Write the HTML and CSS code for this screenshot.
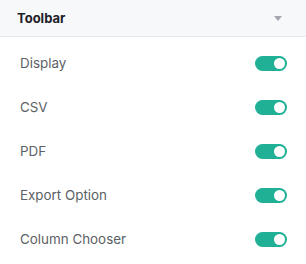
FILE: index.html
```html
<!DOCTYPE html>
<html lang="en">
<head>
<meta charset="UTF-8" />
<meta name="viewport" content="width=device-width, initial-scale=1" />
<title>Toolbar</title>
<link rel="stylesheet" href="styles.css">
</head>
<body>
  <div class="panel">
    <div class="panel-head">
      <span class="panel-title">Toolbar</span>
      <span class="caret"></span>
    </div>
    <div class="options">
      <div class="option">
        <span class="option-label">Display</span>
        <span class="switch on"><span class="knob"></span></span>
      </div>
      <div class="option">
        <span class="option-label">CSV</span>
        <span class="switch on"><span class="knob"></span></span>
      </div>
      <div class="option">
        <span class="option-label">PDF</span>
        <span class="switch on"><span class="knob"></span></span>
      </div>
      <div class="option">
        <span class="option-label">Export Option</span>
        <span class="switch on"><span class="knob"></span></span>
      </div>
      <div class="option">
        <span class="option-label">Column Chooser</span>
        <span class="switch on"><span class="knob"></span></span>
      </div>
    </div>
  </div>
</body>
</html>
```

FILE: styles.css
```css
/* settings panel */
body {
  margin: 0;
  font-family: 'Inter', 'Noto Sans', sans-serif;
  background: #ffffff;
}
.panel {
  width: 306px;
}
.panel-head {
  display: flex;
  align-items: center;
  justify-content: space-between;
  height: 36px;
  padding: 0 24px 0 17px;
  background: #f7f8fa;
  border-bottom: 1px solid #e6e8eb;
}
.panel-title {
  font-size: 13px;
  font-weight: 700;
  color: #1d2129;
}
.caret {
  width: 0;
  height: 0;
  border-left: 4px solid transparent;
  border-right: 4px solid transparent;
  border-top: 5px solid #a3a8b0;
}
.options {
  padding-top: 4px;
}
.option {
  display: flex;
  align-items: center;
  justify-content: space-between;
  height: 44px;
  padding: 0 19px 0 20px;
}
.option-label {
  font-size: 13.4px;
  color: #5c5f66;
}
.switch {
  display: flex;
  align-items: center;
  width: 32px;
  height: 15px;
  padding: 0 2px;
  box-sizing: border-box;
  border-radius: 8px;
  background: #c9cdd4;
}
.switch.on {
  background: #1fb096;
  justify-content: flex-end;
}
.knob {
  width: 11px;
  height: 11px;
  border-radius: 50%;
  background: #ffffff;
}
```
